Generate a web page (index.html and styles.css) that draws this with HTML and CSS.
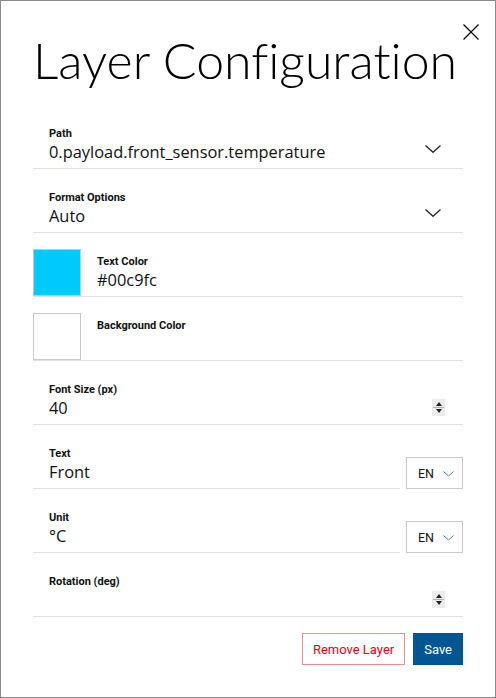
FILE: index.html
```html
<!DOCTYPE html>
<html lang="en">
<head>
<meta charset="utf-8">
<title>Layer Configuration</title>
<link rel="stylesheet" href="styles.css">
</head>
<body>
<div class="dialog">
  <button class="close" type="button" aria-label="Close">
    <svg width="16" height="16" viewBox="0 0 16 16"><path d="M0.5 0.5 L15.5 15.5 M15.5 0.5 L0.5 15.5" stroke="#000" stroke-width="1.2" fill="none"/></svg>
  </button>
  <h1 class="title">Layer Configuration</h1>
  <form class="form">
    <div class="field">
      <div class="field-text">
        <label class="label">Path</label>
        <div class="value">0.payload.front_sensor.temperature</div>
      </div>
      <svg class="chevron" width="16" height="8" viewBox="0 0 16 8"><path d="M0.5 0.5 L8 7.3 L15.5 0.5" stroke="#222" stroke-width="1.3" fill="none"/></svg>
    </div>
    <div class="field">
      <div class="field-text">
        <label class="label">Format Options</label>
        <div class="value">Auto</div>
      </div>
      <svg class="chevron" width="16" height="8" viewBox="0 0 16 8"><path d="M0.5 0.5 L8 7.3 L15.5 0.5" stroke="#222" stroke-width="1.3" fill="none"/></svg>
    </div>
    <div class="field color-field">
      <div class="swatch swatch-cyan"></div>
      <div class="field-text">
        <label class="label">Text Color</label>
        <div class="value">#00c9fc</div>
      </div>
    </div>
    <div class="field color-field">
      <div class="swatch"></div>
      <div class="field-text">
        <label class="label">Background Color</label>
        <div class="value"></div>
      </div>
    </div>
    <div class="field">
      <div class="field-text">
        <label class="label">Font Size (px)</label>
        <div class="value">40</div>
      </div>
      <span class="spinner"><span class="spin-up"></span><span class="spin-down"></span></span>
    </div>
    <div class="field-row">
      <div class="field grow">
        <div class="field-text">
          <label class="label">Text</label>
          <div class="value">Front</div>
        </div>
      </div>
      <div class="lang">EN
        <svg width="11" height="6" viewBox="0 0 11 6"><path d="M0.5 0.5 L5.5 5 L10.5 0.5" stroke="#4a78a8" stroke-width="1" fill="none"/></svg>
      </div>
    </div>
    <div class="field-row">
      <div class="field grow">
        <div class="field-text">
          <label class="label">Unit</label>
          <div class="value">°C</div>
        </div>
      </div>
      <div class="lang">EN
        <svg width="11" height="6" viewBox="0 0 11 6"><path d="M0.5 0.5 L5.5 5 L10.5 0.5" stroke="#4a78a8" stroke-width="1" fill="none"/></svg>
      </div>
    </div>
    <div class="field">
      <div class="field-text">
        <label class="label">Rotation (deg)</label>
        <div class="value"></div>
      </div>
      <span class="spinner"><span class="spin-up"></span><span class="spin-down"></span></span>
    </div>
  </form>
  <div class="actions">
    <button class="btn btn-outline" type="button">Remove Layer</button>
    <button class="btn btn-primary" type="button">Save</button>
  </div>
</div>
</body>
</html>
```

FILE: styles.css
```css
* { box-sizing: border-box; }
html, body { margin: 0; padding: 0; background: #fff; }
body { font-family: Roboto, "Liberation Sans", sans-serif; color: #000; }

.dialog {
  position: relative;
  width: 496px;
  height: 698px;
  border: 1px solid #8a8a8a;
  padding: 29px 32px 0 32px;
  background: #fff;
}

.close {
  position: absolute;
  top: 23px;
  right: 16px;
  width: 16px;
  height: 16px;
  padding: 0;
  border: 0;
  background: none;
  line-height: 0;
}

.title {
  margin: 0 0 14px 0;
  font-family: Lato, "Liberation Sans", sans-serif;
  font-weight: 300;
  font-size: 50px;
  line-height: 61px;
  color: #000;
  white-space: nowrap;
  font-variant-ligatures: none;
}

.form { display: flex; flex-direction: column; }

.field {
  height: 64px;
  display: flex;
  align-items: flex-start;
  border-bottom: 1px solid #e0e0e0;
}
.field.grow { flex: 1; }

.field-text {
  flex: 1;
  padding: 22px 0 0 16px;
  display: flex;
  flex-direction: column;
}

.label {
  font-size: 11px;
  font-weight: 700;
  line-height: 14px;
  color: #111;
}
.value {
  margin-top: 1px;
  font-family: "Open Sans", Roboto, sans-serif;
  font-size: 16.4px;
  line-height: 20px;
  min-height: 20px;
  color: #111;
}

.chevron { margin: 40px 22px 0 0; }

.color-field { align-items: flex-end; }
.color-field .field-text { align-self: flex-start; }
.swatch {
  width: 48px;
  height: 47px;
  border: 1px solid #c8c8c8;
  background: #fff;
}
.swatch-cyan { background: #00c9fc; }

.spinner {
  margin: 38px 18px 0 0;
  width: 13px;
  height: 17px;
  background: #ececec;
  display: flex;
  flex-direction: column;
  justify-content: space-between;
  align-items: center;
  padding: 2px 0;
  position: relative;
}
.spinner::after {
  content: "";
  position: absolute;
  left: 1px; right: 1px; top: 8px;
  height: 1px;
  background: #b0b0b0;
}
.spin-up, .spin-down { width: 0; height: 0; border-left: 3.5px solid transparent; border-right: 3.5px solid transparent; }
.spin-up { border-bottom: 4px solid #222; margin-top: 1px; }
.spin-down { border-top: 4px solid #222; margin-bottom: 1px; }

.field-row { display: flex; align-items: flex-end; gap: 6px; }
.lang {
  width: 57px;
  height: 32px;
  border: 1px solid #c8c8c8;
  display: flex;
  align-items: center;
  padding-left: 11px;
  gap: 9px;
  font-size: 12.5px;
  color: #111;
}
.lang svg { margin-top: 2px; }

.actions {
  display: flex;
  justify-content: flex-end;
  gap: 8px;
  margin-top: 16px;
}
.btn {
  height: 32px;
  font-family: Roboto, "Liberation Sans", sans-serif;
  font-size: 13px;
  padding: 0 10px;
  border-radius: 0;
  cursor: pointer;
}
.btn-outline { background: #fff; border: 1px solid #ea8e96; color: #e20015; }
.btn-primary { background: #005691; border: 1px solid #005691; color: #fff; }
```
